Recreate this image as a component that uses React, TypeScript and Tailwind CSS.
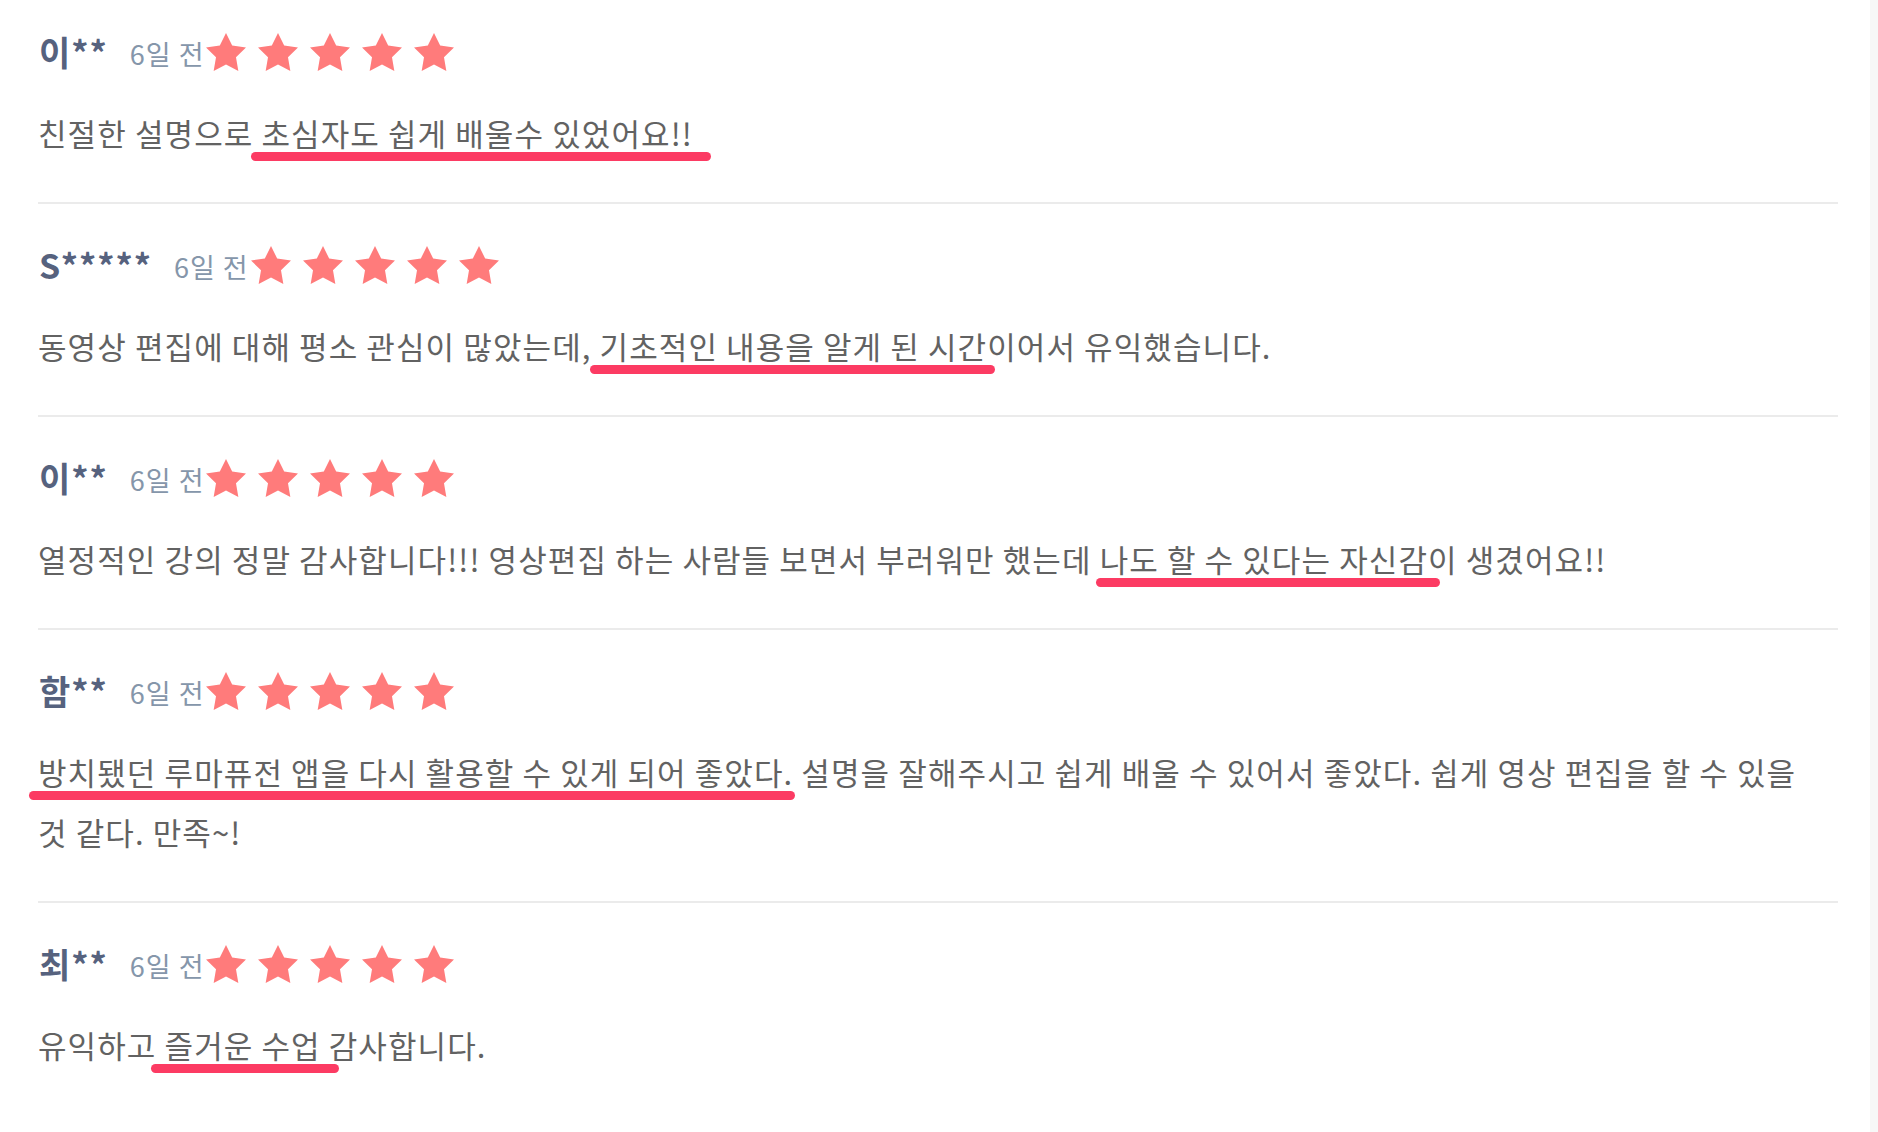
import React from "react";

interface Review {
  id: string;
  name: string;
  date: string;
  before: string;
  highlight: string;
  after: string;
  // underline overhang differs a little per review
  line: string;
}

const REVIEWS: Review[] = [
  {
    id: "r1",
    name: "이**",
    date: "6일 전",
    before: "친절한 설명으로 ",
    highlight: "초심자도 쉽게 배울수 있었어요!!",
    after: "",
    line: "-left-[10px] -right-[18px]",
  },
  {
    id: "r2",
    name: "S*****",
    date: "6일 전",
    before: "동영상 편집에 대해 평소 관심이 많았는데, ",
    highlight: "기초적인 내용을 알게 된 시간",
    after: "이어서 유익했습니다.",
    line: "-left-[10px] -right-[8px]",
  },
  {
    id: "r3",
    name: "이**",
    date: "6일 전",
    before: "열정적인 강의 정말 감사합니다!!! 영상편집 하는 사람들 보면서 부러워만 했는데 ",
    highlight: "나도 할 수 있다는 자신감",
    after: "이 생겼어요!!",
    line: "-left-[4px] -right-[12px]",
  },
  {
    id: "r4",
    name: "함**",
    date: "6일 전",
    before: "",
    highlight: "방치됐던 루마퓨전 앱을 다시 활용할 수 있게 되어 좋았다.",
    after: " 설명을 잘해주시고 쉽게 배울 수 있어서 좋았다. 쉽게 영상 편집을 할 수 있을 것 같다. 만족~!",
    line: "-left-[9px] -right-[2px]",
  },
  {
    id: "r5",
    name: "최**",
    date: "6일 전",
    before: "유익하고 ",
    highlight: "즐거운 수업",
    after: " 감사합니다.",
    line: "-left-[14px] -right-[18px]",
  },
];

function Star() {
  return (
    <svg viewBox="2 2 20 19.02" className="w-[40px] h-[38px] shrink-0" fill="#ff7b7b">
      <polygon points="12,2 15.09,8.26 22,9.27 17,14.14 18.18,21.02 12,17.77 5.82,21.02 7,14.14 2,9.27 8.91,8.26" />
    </svg>
  );
}

export default function App() {
  return (
    <div className="flex min-h-[1132px] bg-white font-['Noto_Sans_CJK_KR','Noto_Sans',sans-serif]">
      <div className="flex-1 pl-[38px] pr-[32px]">
        {REVIEWS.map((review) => (
          <div
            key={review.id}
            className="pt-[31px] first:pt-[22px] pb-[39px] border-b-2 last:border-b-0 border-[#ebebeb]"
          >
            {/* Header: name, date, rating */}
            <div className="flex items-center h-[60px]">
              <span className="text-[34px] font-bold leading-none tracking-[1px] text-[#56627e] mr-[22px] pl-[1px]">
                {review.name}
              </span>
              <span className="text-[27px] leading-none tracking-[1px] text-[#8596aa] mr-[2px] pt-[3px]">
                {review.date}
              </span>
              <div className="flex items-center gap-[12px]">
                {[0, 1, 2, 3, 4].map((i) => (
                  <Star key={i} />
                ))}
              </div>
            </div>

            {/* Body */}
            <p className="mt-[21px] pr-[12px] text-[31px] leading-[60px] tracking-[1.1px] text-[#626262]">
              {review.before}
              <span className="relative inline-block">
                {review.highlight}
                <span
                  className={`absolute top-[49px] h-[9px] rounded-full bg-[#fc3b63] ${review.line}`}
                />
              </span>
              {review.after}
            </p>
          </div>
        ))}
      </div>
      <div className="w-[8px] shrink-0 bg-[#f7f7f7]" />
    </div>
  );
}
